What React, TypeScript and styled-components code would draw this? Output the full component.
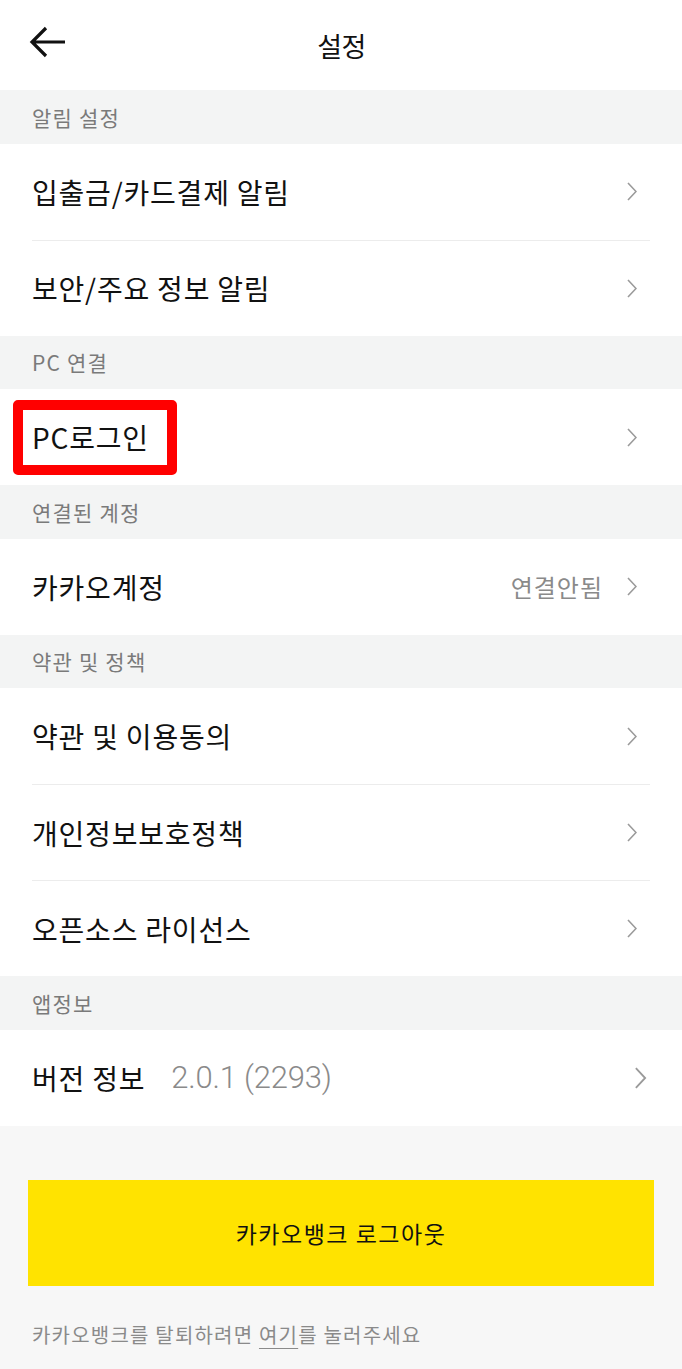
import React from "react";
import styled, { createGlobalStyle } from "styled-components";

const GlobalStyle = createGlobalStyle`
  html, body { margin: 0; padding: 0; background: #f7f7f7; }
  body { font-family: "Noto Sans CJK KR", "Noto Sans", sans-serif; -webkit-font-smoothing: antialiased; }
  * { box-sizing: border-box; }
`;

const Page = styled.div`
  width: 682px;
  min-height: 1369px;
  background: #f7f7f7;
`;

const Header = styled.header`
  height: 90px;
  background: #ffffff;
  display: grid;
  grid-template-columns: 1fr auto 1fr;
  align-items: center;
  padding: 0 0 0 29px;
`;

const BackButton = styled.button`
  width: 44px;
  height: 44px;
  border: 0;
  background: transparent;
  padding: 0;
  margin-top: -7px;
  display: flex;
  align-items: center;
  justify-content: flex-start;
  cursor: pointer;
`;

const Title = styled.h1`
  margin: 0;
  font-size: 27px;
  font-weight: 400;
  color: #111;
  letter-spacing: -0.5px;
  transform: translateX(-14px);
`;

const SectionHeader = styled.div`
  height: 53.5px;
  background: #f3f4f4;
  display: flex;
  align-items: center;
  padding-left: 32px;
  font-size: 21px;
  color: #7a7a7a;
  letter-spacing: 1.2px;
`;

const Group = styled.div`
  background: #ffffff;
  padding: 0 32px;
`;

const Row = styled.div<{ $divider?: boolean }>`
  height: 96px;
  display: flex;
  align-items: center;
  justify-content: space-between;
  border-top: ${(p) => (p.$divider ? "1px solid #ececec" : "none")};
`;

const Label = styled.span`
  font-size: 28px;
  color: #111;
  letter-spacing: 0.8px;
`;

const Highlighted = styled.span`
  position: relative;
  &::before {
    content: "";
    position: absolute;
    left: -19px;
    right: -28px;
    top: -17px;
    bottom: -18px;
    border: 10px solid #ff0000;
    border-radius: 5px;
  }
`;

const LeftGroup = styled.div`
  display: flex;
  align-items: center;
  gap: 26px;
`;

const Version = styled.span`
  font-family: "Roboto", "Liberation Sans", sans-serif;
  font-weight: 300;
  font-size: 31px;
  color: #8a8a8a;
  letter-spacing: -0.2px;
`;

const Right = styled.div`
  display: flex;
  align-items: center;
  gap: 24px;
  padding-right: 13px;
`;

const Status = styled.span`
  font-size: 24px;
  color: #8a8a8a;
  letter-spacing: 1px;
`;

const Bottom = styled.div`
  padding: 54px 28px 0;
`;

const LogoutButton = styled.button`
  width: 100%;
  height: 106px;
  border: 0;
  background: #ffe300;
  font-family: "Noto Sans CJK KR", sans-serif;
  font-size: 23px;
  font-weight: 400;
  letter-spacing: 1.5px;
  color: #111;
  cursor: pointer;
`;

const Footer = styled.p`
  margin: 34px 0 0 4px;
  font-size: 20px;
  color: #8a8a8a;
  letter-spacing: 1.2px;
`;

const Link = styled.span`
  text-decoration: underline;
  text-underline-offset: 5px;
  text-decoration-thickness: 1px;
`;

const Chevron = ({ big }: { big?: boolean }) => (
  <svg width={big ? 13 : 10} height={big ? 22 : 19} viewBox="0 0 10 19" fill="none">
    <polyline points="1,1 9,9.5 1,18" stroke="#9a9a9a" strokeWidth="1.6" strokeLinejoin="miter" />
  </svg>
);

const BackArrow = () => (
  <svg width="37" height="32" viewBox="0 0 37 32" fill="none">
    <path d="M36 16H3M17 2L3 16L17 30" stroke="#111" strokeWidth="3.2" strokeLinecap="butt" strokeLinejoin="miter" />
  </svg>
);

const ChevronWrap = styled.div<{ $shift?: number }>`
  display: flex;
  align-items: center;
  padding-right: ${(p) => p.$shift ?? 13}px;
`;

export default function App() {
  return (
    <>
      <GlobalStyle />
      <Page>
        <Header>
          <BackButton aria-label="뒤로">
            <BackArrow />
          </BackButton>
          <Title>설정</Title>
          <div />
        </Header>

        <SectionHeader>알림 설정</SectionHeader>
        <Group>
          <Row>
            <Label>입출금/카드결제 알림</Label>
            <ChevronWrap><Chevron /></ChevronWrap>
          </Row>
          <Row $divider>
            <Label>보안/주요 정보 알림</Label>
            <ChevronWrap><Chevron /></ChevronWrap>
          </Row>
        </Group>

        <SectionHeader>PC 연결</SectionHeader>
        <Group>
          <Row>
            <Label>
              <Highlighted>PC로그인</Highlighted>
            </Label>
            <ChevronWrap><Chevron /></ChevronWrap>
          </Row>
        </Group>

        <SectionHeader>연결된 계정</SectionHeader>
        <Group>
          <Row>
            <Label>카카오계정</Label>
            <Right>
              <Status>연결안됨</Status>
              <Chevron />
            </Right>
          </Row>
        </Group>

        <SectionHeader>약관 및 정책</SectionHeader>
        <Group>
          <Row>
            <Label>약관 및 이용동의</Label>
            <ChevronWrap><Chevron /></ChevronWrap>
          </Row>
          <Row $divider>
            <Label>개인정보보호정책</Label>
            <ChevronWrap><Chevron /></ChevronWrap>
          </Row>
          <Row $divider>
            <Label>오픈소스 라이선스</Label>
            <ChevronWrap><Chevron /></ChevronWrap>
          </Row>
        </Group>

        <SectionHeader>앱정보</SectionHeader>
        <Group>
          <Row>
            <LeftGroup>
              <Label>버전 정보</Label>
              <Version>2.0.1 (2293)</Version>
            </LeftGroup>
            <ChevronWrap $shift={3}><Chevron big /></ChevronWrap>
          </Row>
        </Group>

        <Bottom>
          <LogoutButton>카카오뱅크 로그아웃</LogoutButton>
          <Footer>
            카카오뱅크를 탈퇴하려면 <Link>여기</Link>를 눌러주세요
          </Footer>
        </Bottom>
      </Page>
    </>
  );
}
